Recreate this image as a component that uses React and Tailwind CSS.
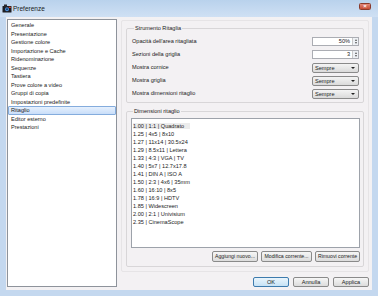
import React from "react"

const SECTIONS = [
  "Generale",
  "Presentazione",
  "Gestione colore",
  "Importazione e Cache",
  "Ridenominazione",
  "Sequenze",
  "Tastiera",
  "Prove colore a video",
  "Gruppi di copia",
  "Impostazioni predefinite",
  "Ritaglio",
  "Editor esterno",
  "Prestazioni",
]

const RATIOS = [
  "1.00 | 1:1 | Quadrato",
  "1.25 | 4x5 | 8x10",
  "1.27 | 11x14 | 30.5x24",
  "1.29 | 8.5x11 | Lettera",
  "1.33 | 4:3 | VGA | TV",
  "1.40 | 5x7 | 12.7x17.8",
  "1.41 | DIN A | ISO A",
  "1.50 | 2:3 | 4x6 | 35mm",
  "1.60 | 16:10 | 8x5",
  "1.78 | 16:9 | HDTV",
  "1.85 | Widescreen",
  "2.00 | 2:1 | Univisium",
  "2.35 | CinemaScope",
]

const btn = "h-[11px] flex items-center justify-center whitespace-nowrap text-[5.2px] rounded-[2px] border border-[#8a8a8a] bg-gradient-to-b from-[#f6f6f6] to-[#dcdcdc] text-[#222]"

function Spin({ value }) {
  return (
    <div className="w-[47px] h-[9px] flex border border-[#abadb3] bg-white">
      <div className="flex-1 text-right pr-[2px] leading-[7px]">{value}</div>
      <div className="w-[6px] flex flex-col border-l border-[#c9c9c9] bg-[#eef1f5]">
        <div className="flex-1 flex items-center justify-center">
          <div className="w-0 h-0 border-l-[1.5px] border-r-[1.5px] border-b-[2px] border-l-transparent border-r-transparent border-b-[#555]" />
        </div>
        <div className="flex-1 flex items-center justify-center">
          <div className="w-0 h-0 border-l-[1.5px] border-r-[1.5px] border-t-[2px] border-l-transparent border-r-transparent border-t-[#555]" />
        </div>
      </div>
    </div>
  )
}

function Combo() {
  return (
    <div className="w-[47px] h-[10px] flex items-center justify-between px-[2px] rounded-[2px] border border-[#8a8a8a] bg-gradient-to-b from-[#f4f4f4] to-[#dadada]">
      <span className="leading-[8px]">Sempre</span>
      <div className="w-0 h-0 border-l-[2px] border-r-[2px] border-t-[2.5px] border-l-transparent border-r-transparent border-t-[#222] mr-[1px]" />
    </div>
  )
}

function AppIcon() {
  return (
    <svg width="10" height="9" viewBox="0 0 10 9">
      <rect x="0.5" y="2" width="9" height="6.5" rx="0.5" fill="#1e1e24" />
      <rect x="2" y="0.5" width="3" height="2" fill="#2a2a30" />
      <circle cx="5" cy="5.2" r="2" fill="#4a8fd8" />
      <circle cx="5" cy="5.2" r="0.9" fill="#0d2f5c" />
      <rect x="6.8" y="2.8" width="2" height="1.2" fill="#e8442c" />
    </svg>
  )
}

export default function App() {
  return (
    <div
      className="w-[378px] h-[296px] flex flex-col bg-[#c4d8ef] text-[5.6px] text-[#1b1b1b] overflow-hidden"
      style={{ fontFamily: '"Liberation Sans", Arial, sans-serif' }}
    >
      {/* Title bar */}
      <div className="h-[17px] flex items-center justify-between pl-[2px] pr-[7px] bg-gradient-to-b from-[#b9d2ec] to-[#cfe0f4]">
        <div className="flex items-center gap-[1px]">
          <AppIcon />
          <span className="text-[6.5px] text-[#1a1a1a]">Preferenze</span>
        </div>
        <div className="w-[12px] h-[7px] mb-[5px] rounded-[1.5px] border border-[#8a3a2c] bg-gradient-to-b from-[#e2897a] to-[#c44a34] flex items-center justify-center">
          <span className="text-white text-[6px] leading-[5px] font-bold">×</span>
        </div>
      </div>

      {/* Client area */}
      <div className="flex-1 mx-[6px] mb-[6px] bg-[#f3f1f3] flex pl-[1px] pt-[2px]">
        {/* Section list */}
        <div className="w-[110px] h-[268px] border border-[#8e939b] bg-white pt-[1px]">
          {SECTIONS.map((s) =>
            s === "Ritaglio" ? (
              <div key={s} className="h-[8.5px] leading-[7px] pl-[2px] rounded-[1px] border border-[#84acdd] bg-gradient-to-b from-[#e6f0fd] to-[#c9def9]">
                {s}
              </div>
            ) : (
              <div key={s} className="h-[8.5px] leading-[8.5px] pl-[3px]">{s}</div>
            )
          )}
        </div>

        {/* Settings panel */}
        <div className="flex-1 flex flex-col pl-[4px]">
          <div className="mt-[1px] mr-[3px] h-[252px] border border-[#e6e4e6] rounded-[2px] pl-[4px] pr-[4px] pt-[4px]">
            <fieldset className="border border-[#d8d6d8] rounded-[2px] pl-[5px] pr-[4px] pb-[2px]">
              <legend className="px-[1px] ml-[2px] leading-[7px]">Strumento Ritaglia</legend>
              <div className="pt-[3px]">
                <div className="h-[13px] flex items-center justify-between">
                  <span>Opacità dell'area ritagliata</span>
                  <Spin value="50%" />
                </div>
                <div className="h-[13px] flex items-center justify-between">
                  <span>Sezioni della griglia</span>
                  <Spin value="3" />
                </div>
                <div className="h-[13px] flex items-center justify-between">
                  <span>Mostra cornice</span>
                  <Combo />
                </div>
                <div className="h-[13px] flex items-center justify-between">
                  <span>Mostra griglia</span>
                  <Combo />
                </div>
                <div className="h-[13px] flex items-center justify-between">
                  <span>Mostra dimensioni ritaglio</span>
                  <Combo />
                </div>
              </div>
            </fieldset>

            <fieldset className="mt-[5px] border border-[#d8d6d8] rounded-[2px] pl-[4px] pr-[3px] pb-[4px]">
              <legend className="px-[1px] ml-[2px] leading-[7px]">Dimensioni ritaglio</legend>
              <div className="mt-[3px] h-[130px] border border-[#9da2aa] bg-white pt-[3px] pl-[1px]">
                {RATIOS.map((r, i) => (
                  <div key={r} className="h-[8px] leading-[8px]">
                    <span className={i === 0 ? "bg-[#ececec] pr-[6px]" : ""}>{r}</span>
                  </div>
                ))}
              </div>
              <div className="mt-[3px] flex justify-end gap-[3px]">
                <div className={`${btn} w-[46px]`}>Aggiungi nuovo...</div>
                <div className={`${btn} w-[51px]`}>Modifica corrente...</div>
                <div className={`${btn} w-[45px]`}>Rimuovi corrente</div>
              </div>
            </fieldset>
          </div>

          <div className="mt-[5px] mr-[3px] flex justify-end gap-[4px]">
            <div className="w-[36px] h-[10px] flex items-center justify-center rounded-[2px] border border-[#3d7bad] bg-gradient-to-b from-[#eaf5fc] to-[#c6e2f5]">OK</div>
            <div className="w-[36px] h-[10px] flex items-center justify-center rounded-[2px] border border-[#8a8a8a] bg-gradient-to-b from-[#f6f6f6] to-[#dcdcdc]">Annulla</div>
            <div className="w-[36px] h-[10px] flex items-center justify-center rounded-[2px] border border-[#8a8a8a] bg-gradient-to-b from-[#f6f6f6] to-[#dcdcdc]">Applica</div>
          </div>
        </div>
      </div>
    </div>
  )
}
